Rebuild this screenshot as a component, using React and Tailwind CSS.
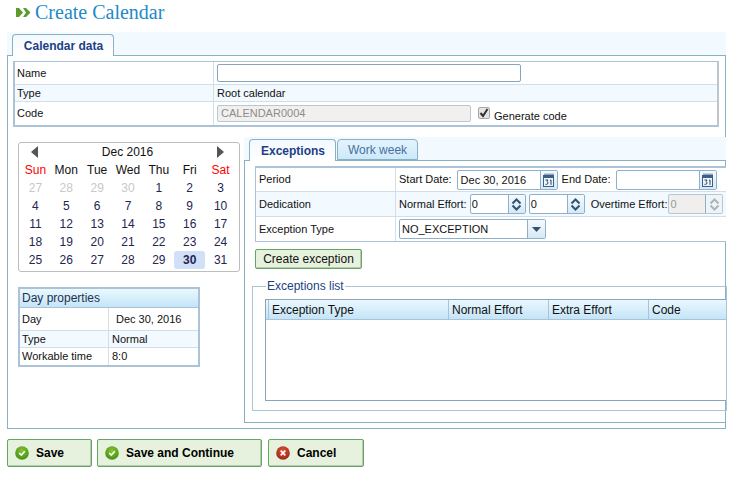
import React from "react";

const days = [27,28,29,30,1,2,3,4,5,6,7,8,9,10,11,12,13,14,15,16,17,18,19,20,21,22,23,24,25,26,27,28,29,30,31];

function Check({ red }) {
  const id = red ? "gr" : "gg";
  return (
    <svg width="14" height="14" viewBox="0 0 15 15" className="shrink-0">
      <defs>
        <radialGradient id={id} cx="50%" cy="35%" r="70%">
          <stop offset="0" stopColor={red ? "#d9563c" : "#86c530"} />
          <stop offset="1" stopColor={red ? "#9c1f0e" : "#3f8c12"} />
        </radialGradient>
      </defs>
      <circle cx="7.5" cy="7.5" r="7.3" fill={`url(#${id})`} />
      {red ? (
        <path d="M5 5l5 5M10 5l-5 5" stroke="#fff" strokeWidth="1.8" fill="none" />
      ) : (
        <path d="M4.5 7.5l2.2 2.2 3.8-4" stroke="#fff" strokeWidth="1.7" fill="none" />
      )}
    </svg>
  );
}

function FootButton({ w, red, children }) {
  return (
    <button className={`${w} h-[28px] flex items-center pl-[7px] gap-[7px] bg-[#e6f2dd] border border-[#62a862] rounded-[2px] shadow-[inset_-1px_-1px_0_#b9c9b3] text-[12px] font-bold text-black`}>
      <Check red={red} />
      <span>{children}</span>
    </button>
  );
}

function CalIcon() {
  return (
    <svg width="13" height="15" viewBox="0 0 13 15">
      <rect x="1.5" y="3.5" width="10" height="11" fill="#eef5fb" stroke="#3c5f86" />
      <rect x="1" y="3" width="11" height="3" fill="#3c5f86" />
      <path d="M3 1.5v2M5 1.5v2M7 1.5v2M9 1.5v2M11 1.5v2" stroke="#3c5f86" strokeWidth="1" />
      <path d="M3.5 8h2.5l-1 1.5q1 .5 1 1.5t-1.2 1.3H3.5M8 8.5l1-.6v5" stroke="#24466e" strokeWidth="1" fill="none" />
    </svg>
  );
}

function Spin({ disabled }) {
  const c = disabled ? "#a9b4bc" : "#33536f";
  return (
    <div className={`w-[17px] self-stretch border-l border-[#8fb0c8] flex items-center justify-center ${disabled ? "bg-[#f0f4f7]" : "bg-gradient-to-b from-[#f4fafe] to-[#d6e9f6]"}`}>
      <svg width="11" height="13" viewBox="0 0 11 13">
        <path d="M1.5 5.5L5.5 1.5l4 4M1.5 7.5l4 4 4-4" stroke={c} strokeWidth="2" fill="none" />
      </svg>
    </div>
  );
}

function SpinInput({ w, disabled }) {
  return (
    <div className={`${w} h-[20px] flex border rounded-[2px] overflow-hidden ${disabled ? "border-[#b9c8d4] bg-[#f0efed] text-[#999]" : "border-[#8fb0c8] bg-white"}`}>
      <span className="flex-1 pl-[1px] leading-[18px]">0</span>
      <Spin disabled={disabled} />
    </div>
  );
}

function DateInput({ w, value }) {
  return (
    <div className={`${w} h-[20px] flex border border-[#8fb0c8] rounded-[2px] overflow-hidden bg-white`}>
      <span className="flex-1 pl-[3px] leading-[18px]">{value}</span>
      <div className="w-[17px] border-l border-[#8fb0c8] bg-gradient-to-b from-[#f4fafe] to-[#d6e9f6] flex items-center justify-center">
        <CalIcon />
      </div>
    </div>
  );
}

function TopRow({ h, alt, last, label, children }) {
  return (
    <div className={`${h} flex ${alt ? "bg-[#f2f9ff]" : "bg-white"} ${last ? "" : "border-b border-[#d3dfe8]"}`}>
      <div className="w-[199px] border-r border-[#d3dfe8] pl-[2px] flex items-center">{label}</div>
      <div className="flex-1 pl-[3px] flex items-center">{children}</div>
    </div>
  );
}

function FormRow({ h, alt, last, label, children }) {
  return (
    <div className={`${h} flex ${alt ? "bg-[#f2f9ff]" : "bg-white"} ${last ? "" : "border-b border-[#d3dfe8]"}`}>
      <div className="w-[140px] border-r border-[#d3dfe8] pl-[3px] flex items-center">{label}</div>
      <div className="flex-1 pl-[3px] flex items-center whitespace-nowrap">{children}</div>
    </div>
  );
}

function PropRow({ h, alt, last, label, children }) {
  return (
    <div className={`${h} flex ${alt ? "bg-[#f2f9ff]" : "bg-white"} ${last ? "" : "border-b border-[#d3dfe8]"}`}>
      <div className="w-[89px] border-r border-[#d3dfe8] pl-[2px] flex items-center">{label}</div>
      <div className="flex-1 flex items-center">{children}</div>
    </div>
  );
}

export default function App() {
  return (
    <div className="w-[742px] h-[485px] overflow-hidden bg-white text-[11px] text-[#111] font-['Liberation_Sans',Arial,sans-serif]">
      <div className="h-[32px] flex items-start">
        <svg width="15" height="9" viewBox="0 0 15 9" className="ml-[16px] mt-[8px]">
          <path d="M0 0h3l4 4.5L3 9H0z" fill="#5f9a2e" />
          <path d="M7 0h3l4.5 4.5L10 9H7l3-4.5z" fill="#5f9a2e" />
        </svg>
        <h1 className="ml-[4px] mt-[1px] text-[20px] leading-[22px] text-[#1d8ac9] font-['Liberation_Serif',serif]">Create Calendar</h1>
      </div>

      <div className="ml-[7px] w-[719px] h-[23px] bg-[#f2f9ff] flex items-end pl-[5px]">
        <div className="w-[102px] h-[22px] -mb-px relative bg-gradient-to-b from-[#f2f9ff] to-white border border-b-0 border-[#8ab0c4] rounded-t-[4px] text-[12px] font-bold text-[#1d3f84] flex items-center justify-center pl-[1px]">
          Calendar data
        </div>
      </div>

      <div className="ml-[7px] w-[719px] h-[374px] border border-[#8ab0c4]">
        <div className="ml-[5px] mt-[5px] w-[706px] h-[66px] border-t border-l-2 border-b-2 border-r-2 border-t-[#aac3d8] border-l-[#aac3d8] border-b-[#aac3d8] border-r-[#bcc6cc]">
          <TopRow h="h-[23px]" label="Name">
            <div className="w-[304px] h-[18px] bg-white border border-[#8aa4bc] rounded-[2px]" />
          </TopRow>
          <TopRow h="h-[17px]" alt label="Type">Root calendar</TopRow>
          <TopRow h="h-[23px]" last label="Code">
            <div className="w-[254px] h-[17px] bg-[#f1f0ee] border border-[#b5c8d6] rounded-[2px] text-[#8c8c8c] pl-[3px] leading-[15px]">CALENDAR0004</div>
            <div className="ml-[7px] mb-[1px] w-[12px] h-[12px] bg-[#e4e4e4] border border-[#a8a8a8] rounded-[2px] flex items-center justify-center">
              <svg width="10" height="10" viewBox="0 0 10 10">
                <path d="M1.5 5l2.5 3 4.5-7" stroke="#333" strokeWidth="2" fill="none" />
              </svg>
            </div>
            <span className="ml-[4px] mt-[6px]">Generate code</span>
          </TopRow>
        </div>

        <div className="flex items-start">
          <div className="ml-[10px] w-[222px] mt-[15px] shrink-0">
            <div className="h-[130px] border border-[#bdbdbd] rounded-[3px] text-[12px] text-[#25254f] pl-[1px] pr-[3px]">
              <div className="h-[18px] flex items-center justify-between pl-[11px] pr-[12px] text-[#111]">
                <svg width="7" height="12" viewBox="0 0 7 12"><path d="M7 0v12L0 6z" fill="#555" /></svg>
                <span>Dec 2016</span>
                <svg width="7" height="12" viewBox="0 0 7 12"><path d="M0 0v12l7-6z" fill="#555" /></svg>
              </div>
              <div className="grid grid-cols-7 h-[18px] pb-[1px] items-center text-center text-[#111]">
                {["Sun","Mon","Tue","Wed","Thu","Fri","Sat"].map((d, i) => (
                  <span key={d} className={i === 0 || i === 6 ? "text-[#ff0000]" : ""}>{d}</span>
                ))}
              </div>
              <div className="grid grid-cols-7 auto-rows-[18px] items-center text-center">
                {days.map((d, i) => (
                  <span
                    key={i}
                    className={
                      i < 4
                        ? "text-[#c8c8c8]"
                        : d === 30
                        ? "h-[18px] leading-[18px] font-bold bg-[#cfe0f8] rounded-[3px]"
                        : ""
                    }
                  >
                    {d}
                  </span>
                ))}
              </div>
            </div>

            <div className="mt-[15px] w-[182px] border-2 border-[#aac3d8]">
              <div className="h-[19px] bg-gradient-to-b from-[#eaf8fe] to-[#c5e4f8] text-[12px] text-[#1c3450] pl-[2px] flex items-center border-b border-[#aac3d8]">Day properties</div>
              <PropRow h="h-[23px]" label="Day"><span className="pl-[7px]">Dec 30, 2016</span></PropRow>
              <PropRow h="h-[17px]" alt label="Type"><span className="pl-[3px]">Normal</span></PropRow>
              <PropRow h="h-[17px]" last label="Workable time"><span className="pl-[3px]">8:0</span></PropRow>
            </div>
          </div>

          <div className="ml-[4px] mt-[10px] w-[482px] shrink-0">
            <div className="h-[23px] bg-[#f2f9ff] flex items-end pl-[5px] gap-[1px]">
              <div className="w-[87px] h-[22px] -mb-px relative bg-gradient-to-b from-[#f2f9ff] to-white border border-b-0 border-[#8ab0c4] rounded-t-[4px] text-[12px] font-bold text-[#1d3f84] flex items-center justify-center pl-[1px]">Exceptions</div>
              <div className="w-[81px] h-[21px] bg-gradient-to-b from-[#e4f4fd] to-[#cce9fa] border border-[#8ab0c4] rounded-t-[4px] text-[12px] text-[#4a6f9c] flex items-center justify-center">Work week</div>
            </div>
            <div className="h-[263px] border border-[#8ab0c4] pl-[10px] pt-[5px]">
              <div className="w-[471px] h-[76px] border-t-2 border-b border-l border-[#aac3d8]">
                <FormRow h="h-[24px]" label="Period">
                  <span>Start Date:</span>
                  <DateInput w="w-[101px] ml-[5px]" value="Dec 30, 2016" />
                  <span className="ml-[4px]">End Date:</span>
                  <DateInput w="w-[101px] ml-[5px]" />
                </FormRow>
                <FormRow h="h-[25px]" alt label="Dedication">
                  <span>Normal Effort:</span>
                  <SpinInput w="w-[56px] ml-[3px]" />
                  <SpinInput w="w-[56px] ml-[3px]" />
                  <span className="ml-[6px]">Overtime Effort:</span>
                  <SpinInput w="w-[55px] ml-[1px]" disabled />
                </FormRow>
                <FormRow h="h-[24px]" last label="Exception Type">
                  <div className="w-[147px] h-[20px] flex border border-[#8fb0c8] rounded-[2px] overflow-hidden bg-white">
                    <span className="flex-1 pl-[2px] leading-[18px]">NO_EXCEPTION</span>
                    <div className="w-[18px] border-l border-[#8fb0c8] bg-gradient-to-b from-[#f4fafe] to-[#d6e9f6] flex items-center justify-center">
                      <svg width="9" height="5" viewBox="0 0 9 5"><path d="M0 0h9L4.5 5z" fill="#33536f" /></svg>
                    </div>
                  </div>
                </FormRow>
              </div>

              <button className="block mt-[7px] w-[107px] h-[20px] bg-[#e6f2dd] border border-[#62a862] rounded-[2px] shadow-[inset_-1px_-1px_0_#b9c9b3] text-[12px] text-[#111]">Create exception</button>

              <fieldset className="ml-[-3px] mt-[10px] w-[474px] h-[132px] border border-[#a8c6d4]">
                <legend className="ml-[13px] px-[1px] text-[12px] leading-[14px] text-[#1d3f84]">Exceptions list</legend>
                <div className="ml-[12px] mt-[6px] w-[461px] h-[102px] bg-white border border-[#8aa4bc] border-r-0">
                  <div className="h-[20px] flex text-[12px] text-[#111] bg-gradient-to-b from-[#eaf8fe] to-[#c5e4f8] border-b border-[#a5c4da]">
                    <div className="w-[3px] border-r border-[#a5c4da]" />
                    <div className="w-[180px] pl-[3px] border-r border-[#a5c4da] flex items-center">Exception Type</div>
                    <div className="w-[100px] pl-[3px] border-r border-[#a5c4da] flex items-center">Normal Effort</div>
                    <div className="w-[100px] pl-[3px] border-r border-[#a5c4da] flex items-center">Extra Effort</div>
                    <div className="flex-1 pl-[3px] flex items-center">Code</div>
                  </div>
                </div>
              </fieldset>
            </div>
          </div>
        </div>
      </div>

      <div className="ml-[7px] mt-[10px] flex">
        <FootButton w="w-[85px]">Save</FootButton>
        <FootButton w="w-[165px] ml-[5px]">Save and Continue</FootButton>
        <FootButton w="w-[96px] ml-[6px]" red>Cancel</FootButton>
      </div>
    </div>
  );
}
